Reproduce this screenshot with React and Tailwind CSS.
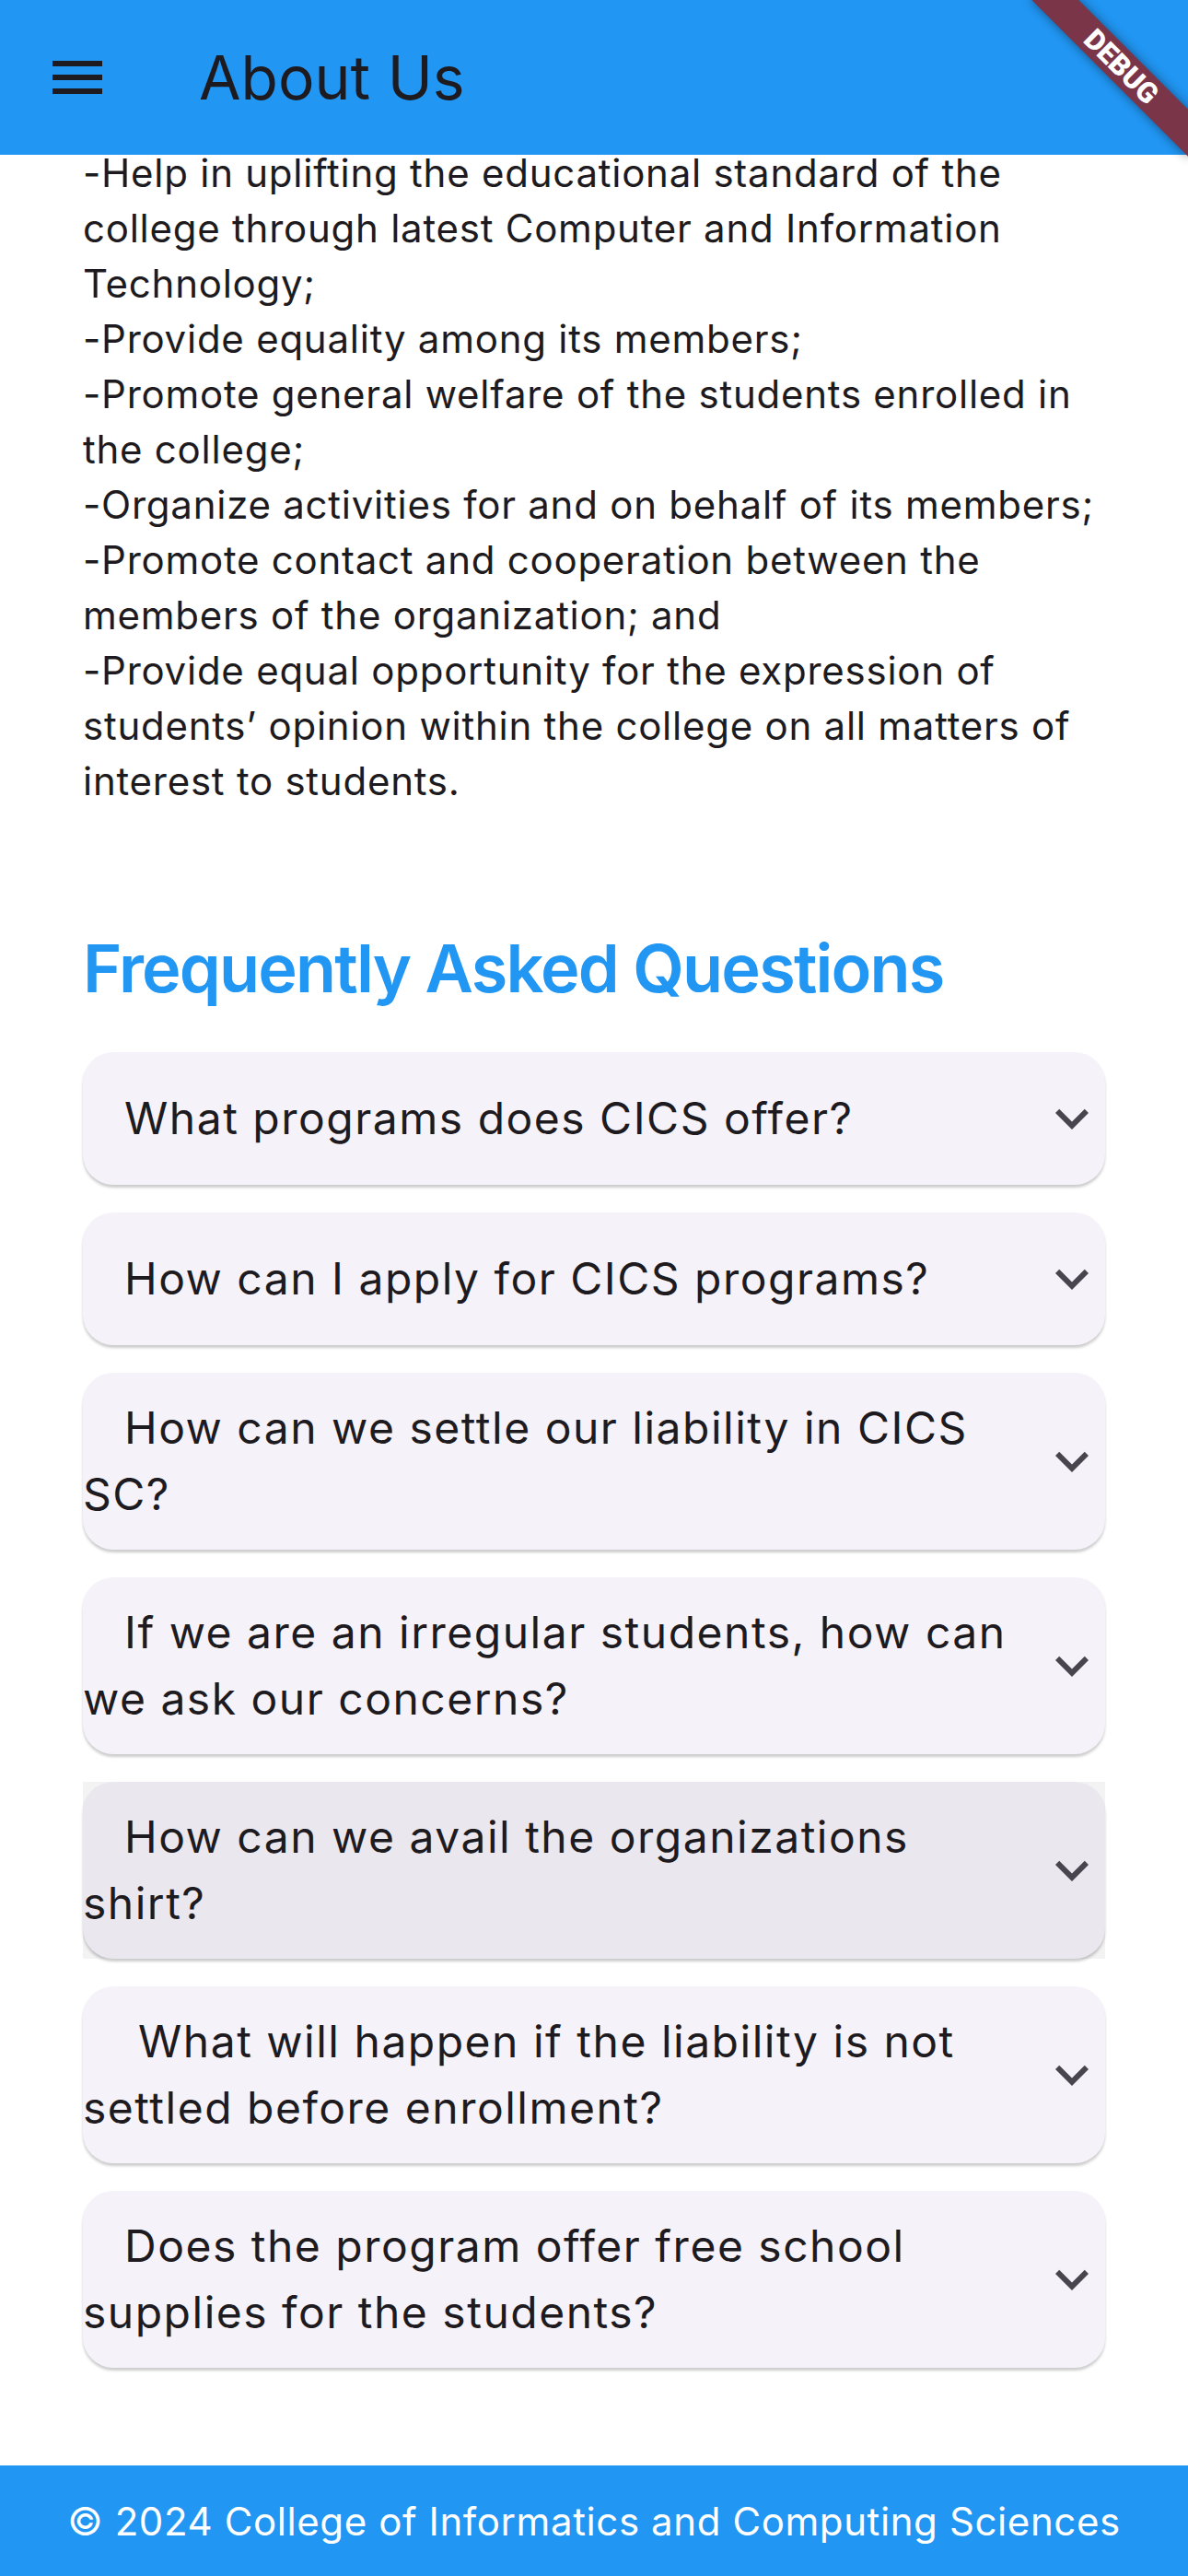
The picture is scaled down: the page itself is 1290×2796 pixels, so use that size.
import React from "react";

const objectives = [
  "-Help in uplifting the educational standard of the college through latest Computer and Information Technology;",
  "-Provide equality among its members;",
  "-Promote general welfare of the students enrolled in the college;",
  "-Organize activities for and on behalf of its members;",
  "-Promote contact and cooperation between the members of the organization; and",
  "-Provide equal opportunity for the expression of students\u2019 opinion within the college on all matters of interest to students.",
];

const faqs = [
  { q: "What programs does CICS offer?", indent: "indent-[45px]" },
  { q: "How can I apply for CICS programs?", indent: "indent-[45px]" },
  { q: "How can we settle our liability in CICS SC?", indent: "indent-[45px]" },
  { q: "If we are an irregular students, how can we ask our concerns?", indent: "indent-[45px]" },
  { q: "How can we avail the organizations shirt?", indent: "indent-[45px]", hovered: true },
  { q: "What will happen if the liability is not settled before enrollment?", indent: "indent-[60px]" },
  { q: "Does the program offer free school supplies for the students?", indent: "indent-[45px]" },
];

const MenuIcon = () => (
  <svg width="72" height="72" viewBox="0 0 24 24" fill="#1d1b20">
    <path d="M3 18h18v-2H3v2zm0-5h18v-2H3v2zm0-7v2h18V6H3z" />
  </svg>
);

const ExpandMore = () => (
  <svg width="72" height="72" viewBox="0 0 24 24" fill="#49454f">
    <path d="M16.59 8.59L12 13.17 7.41 8.59 6 10l6 6 6-6z" />
  </svg>
);

const FaqCard = ({ q, indent, hovered }) => (
  <div className={hovered ? "bg-[#f3f3f3]" : ""}>
    <div
      className={`flex items-center min-h-[144px] py-6 rounded-[33px] shadow-[0_3px_3px_rgba(0,0,0,0.2)] ${
        hovered ? "bg-[#ebe7ee]" : "bg-[#f6f2f9]"
      }`}
    >
      <div
        className={`flex-1 pr-[18px] text-[48px] leading-[72px] tracking-[1.5px] text-[#1d1b20] ${indent}`}
      >
        {q}
      </div>
      <div className="w-[72px] shrink-0">
        <ExpandMore />
      </div>
    </div>
  </div>
);

export default function App() {
  return (
    <div className="relative min-h-screen flex flex-col bg-white overflow-hidden font-['Inter',sans-serif]">
      {/* App bar */}
      <header className="relative z-10 h-[168px] shrink-0 bg-[#2196f3] flex items-center pl-[48px]">
        <MenuIcon />
        <h1 className="ml-[96px] text-[66px] leading-[84px] font-normal text-[#1d1b20]">
          About Us
        </h1>
      </header>

      {/* Body */}
      <main className="flex-1 -mt-[10px] px-[90px]">
        <div className="text-[42px] leading-[60px] tracking-[0.75px] text-[#1d1b20]">
          {objectives.map((line, i) => (
            <div key={i}>{line}</div>
          ))}
        </div>

        <h2 className="mt-[125px] text-[72px] leading-[96px] font-semibold tracking-[-1.8px] text-[#2196f3]">
          Frequently Asked Questions
        </h2>

        <div className="mt-[43px] flex flex-col gap-[30px]">
          {faqs.map((f, i) => (
            <FaqCard key={i} {...f} />
          ))}
        </div>
      </main>

      {/* Footer */}
      <footer className="h-[120px] shrink-0 bg-[#2196f3] flex items-center justify-center">
        <span className="text-[42px] tracking-[0.6px] text-white">
          © 2024 College of Informatics and Computing Sciences
        </span>
      </footer>

      {/* Debug banner */}
      <div className="pointer-events-none absolute top-0 right-0 w-0 h-0 rotate-45 z-20">
        <div className="absolute left-[-120px] top-[84px] w-[240px] h-[36px] bg-[#7b3549] shadow-[0_0_12px_rgba(0,0,0,0.45)] flex items-center justify-center">
          <span className="font-['Roboto',sans-serif] font-black text-white text-[31px] leading-none">
            DEBUG
          </span>
        </div>
      </div>
    </div>
  );
}
